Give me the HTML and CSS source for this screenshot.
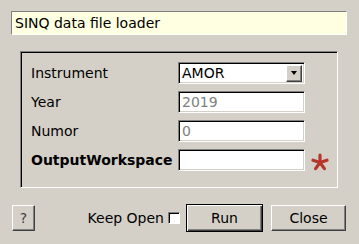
FILE: index.html
```html
<!DOCTYPE html>
<html lang="en">
<head>
    <meta charset="UTF-8">
    <title>SINQ data file loader</title>
    <link rel="stylesheet" href="styles.css">
</head>
<body>
    <div class="title">SINQ data file loader</div>
    <div class="group">
        <div class="form">
            <label>Instrument</label>
            <div class="combo">
                <span class="combo-text">AMOR</span>
                <span class="combo-btn"><span class="arrow"></span></span>
            </div>
            <span></span>

            <label>Year</label>
            <div class="field grey">2019</div>
            <span></span>

            <label>Numor</label>
            <div class="field grey">0</div>
            <span></span>

            <label class="bold">OutputWorkspace</label>
            <div class="field"></div>
            <span class="required">
                <!-- five armed asterisk -->
                <svg width="18" height="18" viewBox="0 0 18 18">
                    <g stroke="#b5372a" stroke-width="3.2" stroke-linecap="round">
                        <line x1="9" y1="9.5" x2="9" y2="2"/>
                        <line x1="9" y1="9.5" x2="16" y2="7.2"/>
                        <line x1="9" y1="9.5" x2="13.4" y2="15.6"/>
                        <line x1="9" y1="9.5" x2="4.6" y2="15.6"/>
                        <line x1="9" y1="9.5" x2="2" y2="7.2"/>
                    </g>
                </svg>
            </span>
        </div>
    </div>
    <div class="actions">
        <button class="btn help">?</button>
        <span class="keep">Keep Open <span class="check"></span></span>
        <button class="btn run">Run</button>
        <button class="btn close">Close</button>
    </div>
</body>
</html>
```

FILE: styles.css
```css
body {
    margin: 0;
    background-color: #d4d0c8;
    font-family: "DejaVu Sans", sans-serif;
    font-size: 14px;
    color: #000;
}
.title {
    margin: 11px 12px 0 11px;
    height: 22px;
    line-height: 22px;
    padding-left: 3px;
    background: #ffffe1;
    border-top: 1px solid #808080;
    border-left: 1px solid #808080;
    border-bottom: 1px solid #fff;
    border-right: 1px solid #fff;
}
.group {
    box-sizing: border-box;
    margin: 16px 21px 0 20px;
    height: 137px;
    border-top: 1px solid #808080;
    border-left: 1px solid #808080;
    border-bottom: 1px solid #fff;
    border-right: 1px solid #fff;
    box-shadow: inset 1px 1px 0 #000, inset -1px -1px 0 #d4d0c8;
    padding-top: 10px;
    padding-left: 10px;
}
.form {
    display: grid;
    grid-template-columns: 147px 127px 30px;
    grid-auto-rows: 22px;
    row-gap: 7px;
    align-items: center;
}
.form label {
    line-height: 22px;
}
.form label.bold {
    font-weight: bold;
}
.field,
.combo {
    box-sizing: border-box;
    height: 22px;
    background: #fff;
    border-top: 1px solid #808080;
    border-left: 1px solid #808080;
    border-bottom: 1px solid #fff;
    border-right: 1px solid #fff;
    box-shadow: inset 1px 1px 0 #000, inset -1px -1px 0 #d4d0c8;
    padding-left: 3px;
    line-height: 20px;
}
.field.grey {
    color: #808080;
}
.combo {
    display: flex;
    align-items: center;
    justify-content: space-between;
    padding-right: 2px;
}
.combo-btn {
    box-sizing: border-box;
    width: 16px;
    height: 17px;
    background: #d4d0c8;
    border-top: 1px solid #fff;
    border-left: 1px solid #fff;
    border-bottom: 1px solid #404040;
    border-right: 1px solid #404040;
    box-shadow: inset -1px -1px 0 #808080;
    display: flex;
    align-items: center;
    justify-content: center;
}
.arrow {
    width: 0;
    height: 0;
    border-left: 3.5px solid transparent;
    border-right: 3.5px solid transparent;
    border-top: 4px solid #000;
}
.required {
    display: flex;
    align-items: center;
    padding-left: 6px;
    padding-top: 3px;
}
.actions {
    display: flex;
    align-items: center;
    margin-top: 16px;
    padding: 0 13px 0 12px;
}
.btn {
    box-sizing: border-box;
    font-family: "DejaVu Sans", sans-serif;
    font-size: 14px;
    color: #000;
    background: #d4d0c8;
    border-top: 1px solid #fff;
    border-left: 1px solid #fff;
    border-bottom: 1px solid #404040;
    border-right: 1px solid #404040;
    box-shadow: inset -1px -1px 0 #808080;
    padding: 0;
    height: 26px;
}
.help {
    width: 23px;
    color: #404040;
}
.keep {
    margin-left: auto;
    display: flex;
    align-items: center;
}
.check {
    display: inline-block;
    box-sizing: border-box;
    width: 12px;
    height: 12px;
    margin-left: 4px;
    background: #fff;
    border-top: 1px solid #808080;
    border-left: 1px solid #808080;
    border-bottom: 1px solid #fff;
    border-right: 1px solid #fff;
    box-shadow: inset 1px 1px 0 #000;
}
.run {
    margin-left: 6px;
    width: 77px;
    height: 28px;
    border: 1px solid #000;
    box-shadow: inset 1px 1px 0 #fff, inset -1px -1px 0 #404040, inset -2px -2px 0 #808080;
}
.close {
    margin-left: 8px;
    width: 75px;
}
```
